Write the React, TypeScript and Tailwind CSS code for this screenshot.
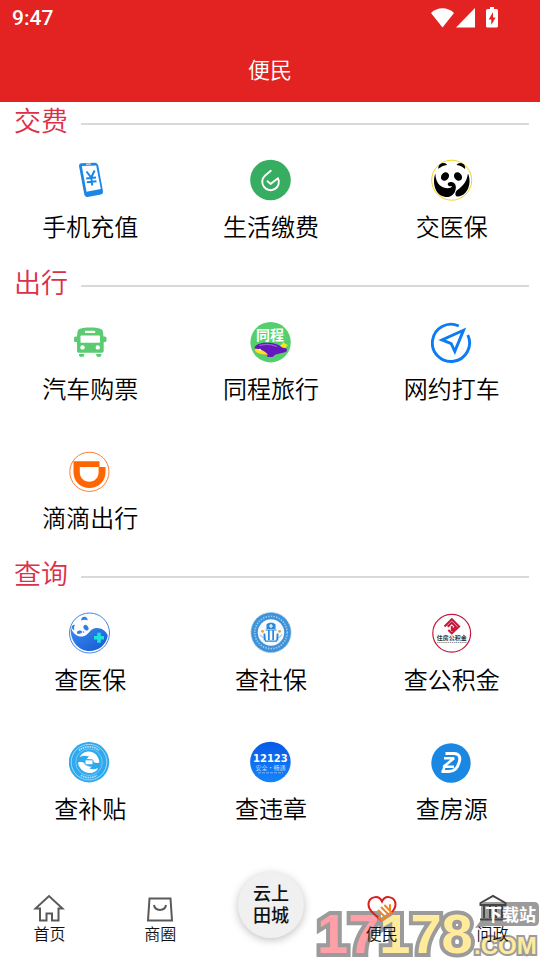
import React from "react";

interface Service {
  name: string;
  icon: React.ReactNode;
}

interface Section {
  title: string;
  items: Service[];
}

const Icon = ({ children }: { children: React.ReactNode }) => (
  <svg viewBox="0 0 42 42" className="h-[42px] w-[42px]" fill="none" aria-hidden="true">
    {children}
  </svg>
);

const PhoneIcon = () => (
  <Icon>
    <path fill="#1a86e6" d="M12 4.2 26 3.8q2.600.1 3.200 2.400L34 32.500q.3 2.400-2 3l-13.500 2.400q-2.700.3-3.200-2.400L10 7q-.2-2.400 2-2.800Z" />
    <path fill="#fff" d="m12.800 7 14.400-.6L31.800 30l-14.300 2.800Z" />
    <path stroke="#fff" strokeLinecap="round" d="m17.500 5.200 4-.2" />
    <path stroke="#1a86e6" strokeWidth="2" d="m17.500 12.500 4.700 6 3.400-7M22.200 18l1 8.500M17.200 19.500l9.800-1M17.800 23.200l9.700-1" />
  </Icon>
);

const BillIcon = () => (
  <Icon>
    <circle cx="20.500" cy="21" r="20.300" fill="#36ad61" />
    <path stroke="#fff" strokeWidth="1.900" strokeLinecap="round" strokeLinejoin="round" d="m20.800 11.800-5.900 5A8.300 8.300 0 1 0 28 19.200l-7.500 5.700-3-2.700" />
  </Icon>
);

const PandaIcon = () => (
  <Icon>
    <circle cx="20.700" cy="21.200" r="20" stroke="#f4d21f" />
    <path fill="#000" d="M7.300 9.800C7 6.500 9.500 3.800 12.800 4c1.700 0 2.900.9 3.200 2-3.700.3-6 1.800-8.700 3.800ZM25.500 6c1-1.700 4-2.700 6.400-1.200 2.100 1.300 2.600 3.300 2.100 5.300-2.600-2.200-4.800-3.700-8.500-4.100Z" />
    <ellipse cx="14" cy="17.500" rx="3.700" ry="4.600" fill="#000" transform="rotate(38 14 17.500)" />
    <ellipse cx="27" cy="17.500" rx="3.700" ry="4.600" fill="#000" transform="rotate(-38 27 17.500)" />
    <path fill="#000" d="M4.300 14.500c.4 6 2.300 11.800 8.300 14 3.800 1.300 8.100.6 8.500-1.600-.8.700-4.300.6-4.400-1.700 0-1.700 2.300-2.700 4.700-2 3.600 1 4.300 5.200 2.600 9.300-1.500 3.600-5.200 6-9.500 5.500C6.700 37 2.700 29.500 3 21.500c.1-2.600.6-5 1.300-7ZM37 14.500c2.800 6.500 1.800 14.500-2.600 19.300-2.700 3-6.600 4.200-8.600 3.700-1.700-.7-2-3.300-.3-5.800C29.500 28.500 35.500 25 37 14.500Z" />
  </Icon>
);

const BusIcon = () => (
  <Icon>
    <path fill="#5acb70" d="M8.500 10.500C9 8 11 7.300 14 6.900c4.700-.6 9.700-.6 14.400 0 3 .4 5 1.100 5.500 3.600l.6 5h1.500q1.500 0 1.500 1.500v2.500q0 1.500-1.500 1.500h-1.300v9q0 1.800-1.700 1.800H9.700Q8 31.800 8 30v-9H6.500Q5 21 5 19.500V17q0-1.500 1.500-1.500H8ZM10 33h5.200v1.200q0 1.800-2.600 1.800T10 34.200Zm17.200 0h5.200v1.200q0 1.800-2.600 1.800t-2.600-1.800Z" />
    <rect x="15.800" y="9.800" width="10.500" height="2.200" rx="1" fill="#fff" />
    <rect x="11.500" y="14.500" width="19.500" height="7.300" rx=".8" fill="#fff" />
    <circle cx="13.500" cy="26.400" r="2.200" fill="#fff" />
    <circle cx="28.800" cy="26.400" r="2.200" fill="#fff" />
  </Icon>
);

const TravelIcon = () => (
  <Icon>
    <circle cx="20.600" cy="21.200" r="20.200" fill="#55cf6c" />
    <text x="6" y="19" fontSize="14" fontWeight="700" fill="#fff" className="font-['Noto_Sans_CJK_SC',sans-serif]">同程</text>
    <path fill="#f7e51b" d="m30 25 3-3.200q1.500-.7 2 1l2.500 1q.5 1.500-1.500 2l-.5 2.500-6-1Z" />
    <path fill="#6517bd" d="M4.500 27C5.500 23 11 21.600 17 21.700c7 0 12 1.600 15.200 4.800l3.800.8c1.700 1 1.200 3.300-1 4l-9.500 2.200-3 2.600h-5l-.5-2C9 33.600 4 31 4.500 27Z" />
    <path fill="#f7e51b" d="M4.500 27.500c5 .2 10 2 13.500 6.200C10.500 34.200 4.300 32 4.500 27.500Z" />
    <circle cx="9.800" cy="28.800" r="1.100" fill="#fff" />
    <path stroke="#9b5be0" strokeWidth="1.200" strokeLinecap="round" d="M10 24.300c5-1.300 12-1 16.500 1.200" />
  </Icon>
);

const TaxiIcon = () => (
  <Icon>
    <path stroke="#0b7cf5" strokeWidth="2.900" d="M27.800 5A18.600 18.600 0 1 0 36.800 14" />
    <path stroke="#0b7cf5" strokeWidth="2.900" d="M32.500 9.200 11 18.900l9.200 3.800 3.600 7.600Z" />
  </Icon>
);

const DidiIcon = () => (
  <Icon>
    <circle cx="20.400" cy="21.800" r="19.600" stroke="#fb7d35" />
    <path fill="#ff6500" fillRule="evenodd" d="M4.500 11.300h26V17h6v5c0 9.500-7 16-16 16s-16-6.500-16-16Zm6.300 5.700v5.200c0 5.600 4 9.500 9.500 9.500s9.300-3.900 9.300-9.500V17Z" />
  </Icon>
);

const MedicalIcon = () => (
  <Icon>
    <defs>
      <linearGradient id="wave" x1="0" y1="0" x2="1" y2="1">
        <stop offset="0" stopColor="#3a8cf2" />
        <stop offset="1" stopColor="#1557cf" />
      </linearGradient>
    </defs>
    <circle cx="20.500" cy="21" r="20" stroke="#3f86e6" />
    <path fill="url(#wave)" d="M1.800 15.500C4 22 8.500 25 13.500 24.500c6-.6 7-7.500 12.500-8.300 5.500-.8 10.500 2 12.800 7.300C37.500 32.500 30 39 20.500 39 9.500 39 .5 28.500 1.800 15.500Z" />
    <path fill="#2f7fe8" d="M12 8.500C12.300 5.500 14 4.600 15.500 4.700c1.700.1 3 1.500 3.300 3.600-2.300-1-4.700-.8-6.800.2ZM2.500 16c.3-2.500 1.700-3.500 3.500-3.200-1 1.700-1.200 4-.7 5.700Z" />
    <ellipse cx="17" cy="15.700" rx="2.300" ry="3" fill="#2f7fe8" transform="rotate(-35 17 15.700)" />
    <ellipse cx="10.500" cy="20.200" rx="2.600" ry="1.700" fill="#2f7fe8" transform="rotate(-10 10.500 20.200)" />
    <circle cx="14.500" cy="20" r=".8" fill="#2f7fe8" />
    <path stroke="#1ee3dc" strokeWidth="3.600" d="M30 20.700v10M25 25.700h10" />
  </Icon>
);

const SocialIcon = () => (
  <Icon>
    <circle cx="21" cy="20.500" r="20" fill="#3f92d8" stroke="#8bc3ec" strokeDasharray="1.500 1" />
    <circle cx="21" cy="20.500" r="16.200" stroke="#d4ebfa" strokeWidth="1.600" strokeDasharray="1.500 1.200" opacity=".6" />
    <circle cx="21" cy="20.500" r="13.200" fill="#f4faff" />
    <path fill="#2a86d6" d="M16.500 12.500C18 10 24 10 25.500 12.500V17h-9ZM18 18h1.700v10H18Zm4.300 0H24v10h-1.700ZM15.500 17.500h11v1h-11ZM15 28.500h12v1.300H15Zm-1.500-7h1.800l.5 7h-2Zm13.200 0h1.800l-.3 7h-2Z" />
    <path stroke="#fff" strokeWidth="1.200" d="M21 12v4m-2-2h4" />
    <circle cx="12.500" cy="19.300" r="1.400" fill="#f39a2b" />
    <circle cx="29.600" cy="19.300" r="1.400" fill="#f39a2b" />
    <path stroke="#6db5ec" d="M10 22.500c1.500 2 2.500 3 4 3M32 22.500c-1.500 2-2.500 3-4 3" />
  </Icon>
);

const FundIcon = () => (
  <Icon>
    <circle cx="20.700" cy="21.300" r="18.900" stroke="#c4183c" strokeWidth="1.200" fill="#fff" />
    <path stroke="#c4183c" strokeWidth="2" d="m13.500 14.500 7.300-7.300 7.300 7.300-7.300 6.800-3.500-3.200M16.700 14.700l4.100-4 4 4-4 3.700M20.800 14v5" />
    <text x="20.700" y="28" fontSize="6" fontWeight="700" textAnchor="middle" fill="#333" className="font-['Noto_Sans_CJK_SC',sans-serif]">住房公积金</text>
    <path stroke="#999" strokeDasharray="1.500 .6" d="M6 30.500h30" />
  </Icon>
);

const SubsidyIcon = () => (
  <Icon>
    <circle cx="20" cy="21.200" r="20.200" fill="#2fa8ee" />
    <circle cx="20" cy="21.200" r="17.800" stroke="#b9e3fb" strokeWidth=".8" />
    <path stroke="#d3eefd" strokeWidth="1.800" strokeDasharray="1.500 .8" opacity=".8" d="M10 9.500a15.300 15.300 0 0 1 20 0M12 34.300a15.300 15.300 0 0 0 16 0" />
    <circle cx="20" cy="21.200" r="13.300" stroke="#a5dafa" strokeWidth=".6" />
    <path fill="#fff" d="M11 16c1.500-4.500 8-7 13-4.500 4 1.700 6 6 6.500 10-2.500 1-5.500.5-7-1.500-1.500-1.700-3.500-2.200-6-2l2.500-2.500c-3-1-6-1.300-9 .5ZM29 27c-1.500 4.500-8 6.500-13 4-4-1.700-6.500-5.500-7-9.500 2.500-1 6-.5 7.500 1.800 1.500 1.700 4 2.700 6.500 2.200L20.500 27.500c3 1 5.500 1 8.500-.5Z" />
    <rect x="16" y="18.800" width="8" height="5" rx=".8" fill="#fff" stroke="#2fa8ee" />
  </Icon>
);

const TrafficIcon = () => (
  <Icon>
    <defs>
      <linearGradient id="traffic" x1="0" y1="0" x2="0" y2="1">
        <stop offset="0" stopColor="#0859e6" />
        <stop offset="1" stopColor="#1484fb" />
      </linearGradient>
    </defs>
    <circle cx="20.400" cy="21" r="20.300" fill="url(#traffic)" />
    <text x="20.400" y="21" fontSize="10" fontWeight="700" textAnchor="middle" fill="#fff" className="font-['DejaVu_Sans',sans-serif]">12123</text>
    <text x="20.400" y="29" fontSize="6" textAnchor="middle" fill="#cfe3ff" className="font-['Noto_Sans_CJK_SC',sans-serif]">安全·畅通</text>
    <path stroke="#a9cdff" strokeWidth=".7" strokeDasharray="3 1" d="M8 31.800h25" />
  </Icon>
);

const HouseIcon = () => (
  <Icon>
    <circle cx="20" cy="22" r="19.700" fill="#1a87e2" />
    <path stroke="#fff" strokeWidth="3" d="M14.500 12.500H23c5 0 6.500 3.500 5.500 7.500-1.500 6.500-5 10.500-10.500 10.500h-7.500" />
    <path stroke="#fff" strokeWidth="2.600" strokeLinejoin="bevel" d="M13 17.300h10L12.500 25.800H23M12 31l1.500-6" />
  </Icon>
);

const NavIcon = ({ children }: { children: React.ReactNode }) => (
  <svg viewBox="0 0 32 28" className="h-7 w-8" fill="none" stroke="#5a5a5a" strokeWidth="2" aria-hidden="true">
    {children}
  </svg>
);

const sections: Section[] = [
  {
    title: "交费",
    items: [
      { name: "手机充值", icon: <PhoneIcon /> },
      { name: "生活缴费", icon: <BillIcon /> },
      { name: "交医保", icon: <PandaIcon /> },
    ],
  },
  {
    title: "出行",
    items: [
      { name: "汽车购票", icon: <BusIcon /> },
      { name: "同程旅行", icon: <TravelIcon /> },
      { name: "网约打车", icon: <TaxiIcon /> },
      { name: "滴滴出行", icon: <DidiIcon /> },
    ],
  },
  {
    title: "查询",
    items: [
      { name: "查医保", icon: <MedicalIcon /> },
      { name: "查社保", icon: <SocialIcon /> },
      { name: "查公积金", icon: <FundIcon /> },
      { name: "查补贴", icon: <SubsidyIcon /> },
      { name: "查违章", icon: <TrafficIcon /> },
      { name: "查房源", icon: <HouseIcon /> },
    ],
  },
];

const StatusBar = () => (
  <div className="flex h-9 items-center justify-between pl-3 pr-10">
    <span className="font-['Roboto',sans-serif] text-[21px] font-medium leading-9">9:47</span>
    <svg viewBox="0 0 70 22" className="h-[22px] w-[70px]" fill="#fff" aria-hidden="true">
      <path d="M1 6C7.500-.2 17.500-.2 24 6L12.500 20.500Z" />
      <path d="M45 1v19.500H26Z" />
      <path fillRule="evenodd" d="M60 0h4v2h2.500q1.500 0 1.500 1.500V19q0 1.500-1.500 1.500h-9Q56 20.500 56 19V3.500Q56 2 57.500 2H60ZM63 5l-4.300 7.500h2.600V18l4.300-7.500H63Z" />
    </svg>
  </div>
);

const Watermark = () => (
  <svg
    viewBox="0 0 226 62"
    className="pointer-events-none absolute bottom-0 right-0 h-[62px] w-[226px] font-['Liberation_Sans',sans-serif] font-bold"
    stroke="#9b9b9b"
    paintOrder="stroke"
    aria-hidden="true"
  >
    <text x="3" y="55" fontSize="56" strokeWidth="8">
      <tspan fill="#ff9fa8">17</tspan>
      <tspan fill="#ffeb9b">178</tspan>
    </text>
    <text x="160" y="56" fontSize="24" strokeWidth="4" fill="#ffeb9b">.COM</text>
    <path fill="#9b9b9b" stroke="none" d="M172 4h48q5 0 5 5v14q0 5-5 5h-47l-12 2 6-8V9q0-5 5-5Z" />
  </svg>
);

const TabBar = () => (
  <nav className="relative mt-auto h-[90px]">
    <Watermark />
    <div className="relative -ml-1.5 -mr-2 grid h-full grid-cols-5 items-end text-base leading-[22px] text-[#111]">
      <a href="#home" className="flex flex-col items-center pb-4">
        <NavIcon>
          <path d="M7 14.500H2.500L16 2l13.500 12.500H25.500v12H19v-7h-5.500v7H7Z" />
        </NavIcon>
        首页
      </a>
      <a href="#mall" className="flex flex-col items-center pb-4">
        <NavIcon>
          <path d="M5.500 4.500h21l1.500 22H4ZM10 11c1 6.500 11 6.500 12 0" />
        </NavIcon>
        商圈
      </a>
      <a href="#cloud" className="flex flex-col items-center pb-[22px]">
        <span className="flex h-[66px] w-[66px] items-center justify-center rounded-full bg-[#f0f0f0] pb-1 text-center text-lg font-medium leading-[22px] shadow-[0_2px_8px_rgba(0,0,0,0.25)]">
          云上
          <br />
          田城
        </span>
      </a>
      <a href="#service" className="flex flex-col items-center pb-4">
        <NavIcon>
          <path stroke="#d8201f" d="M16 26.500C9 21 2.500 16.500 2.500 10.500 2.500 3 12.500 0 16 7.500 19.500 0 29.500 3 29.500 10.500c0 3-1.500 5.500-4 8" />
          <path stroke="#f08326" strokeLinecap="round" d="m25.500 18.500-9.500 8-3-3M12.500 16.500l6 6M15.500 13.500l6 6M19 11.500l5 5.500v-6" />
        </NavIcon>
        便民
      </a>
      <a href="#ask" className="flex flex-col items-center pb-4">
        <NavIcon>
          <path stroke="#444" d="M3.500 9 16 2l12.500 7v2h-25ZM7 11v13M13 11v13M19 11v13M25 11v13M3 25.500h26" />
        </NavIcon>
        问政
      </a>
    </div>
    <span className="pointer-events-none absolute right-1 top-[34px] text-[17px] font-bold leading-5 text-white">下载站</span>
  </nav>
);

const App = () => {
  return (
    <div className="flex min-h-screen flex-col overflow-hidden bg-white font-['Noto_Sans_CJK_SC',sans-serif] font-[350]">
      <header className="bg-[#e32322] text-white">
        <StatusBar />
        <h1 className="pb-[18px] pt-4 text-center text-[22px] font-[350] leading-8">便民</h1>
      </header>
      <main>
        {sections.map((section) => (
          <section key={section.title}>
            <div className="flex h-[33px] items-center gap-[13px] pl-[14px] pr-[11px] pt-0.5">
              <h2 className="text-[27px] font-[350] leading-8 text-[#dc2f48]">{section.title}</h2>
              <div className="mt-2 h-0.5 flex-1 bg-[#d9d9d9]" />
            </div>
            <div className="-mr-0.5 grid grid-cols-3">
              {section.items.map((item) => (
                <a
                  key={item.name}
                  href="#service"
                  className="flex h-[129px] flex-col items-center gap-[9px] pt-6 text-2xl font-[350] leading-8 text-black"
                >
                  {item.icon}
                  {item.name}
                </a>
              ))}
            </div>
          </section>
        ))}
      </main>
      <TabBar />
    </div>
  );
};

export default App;
